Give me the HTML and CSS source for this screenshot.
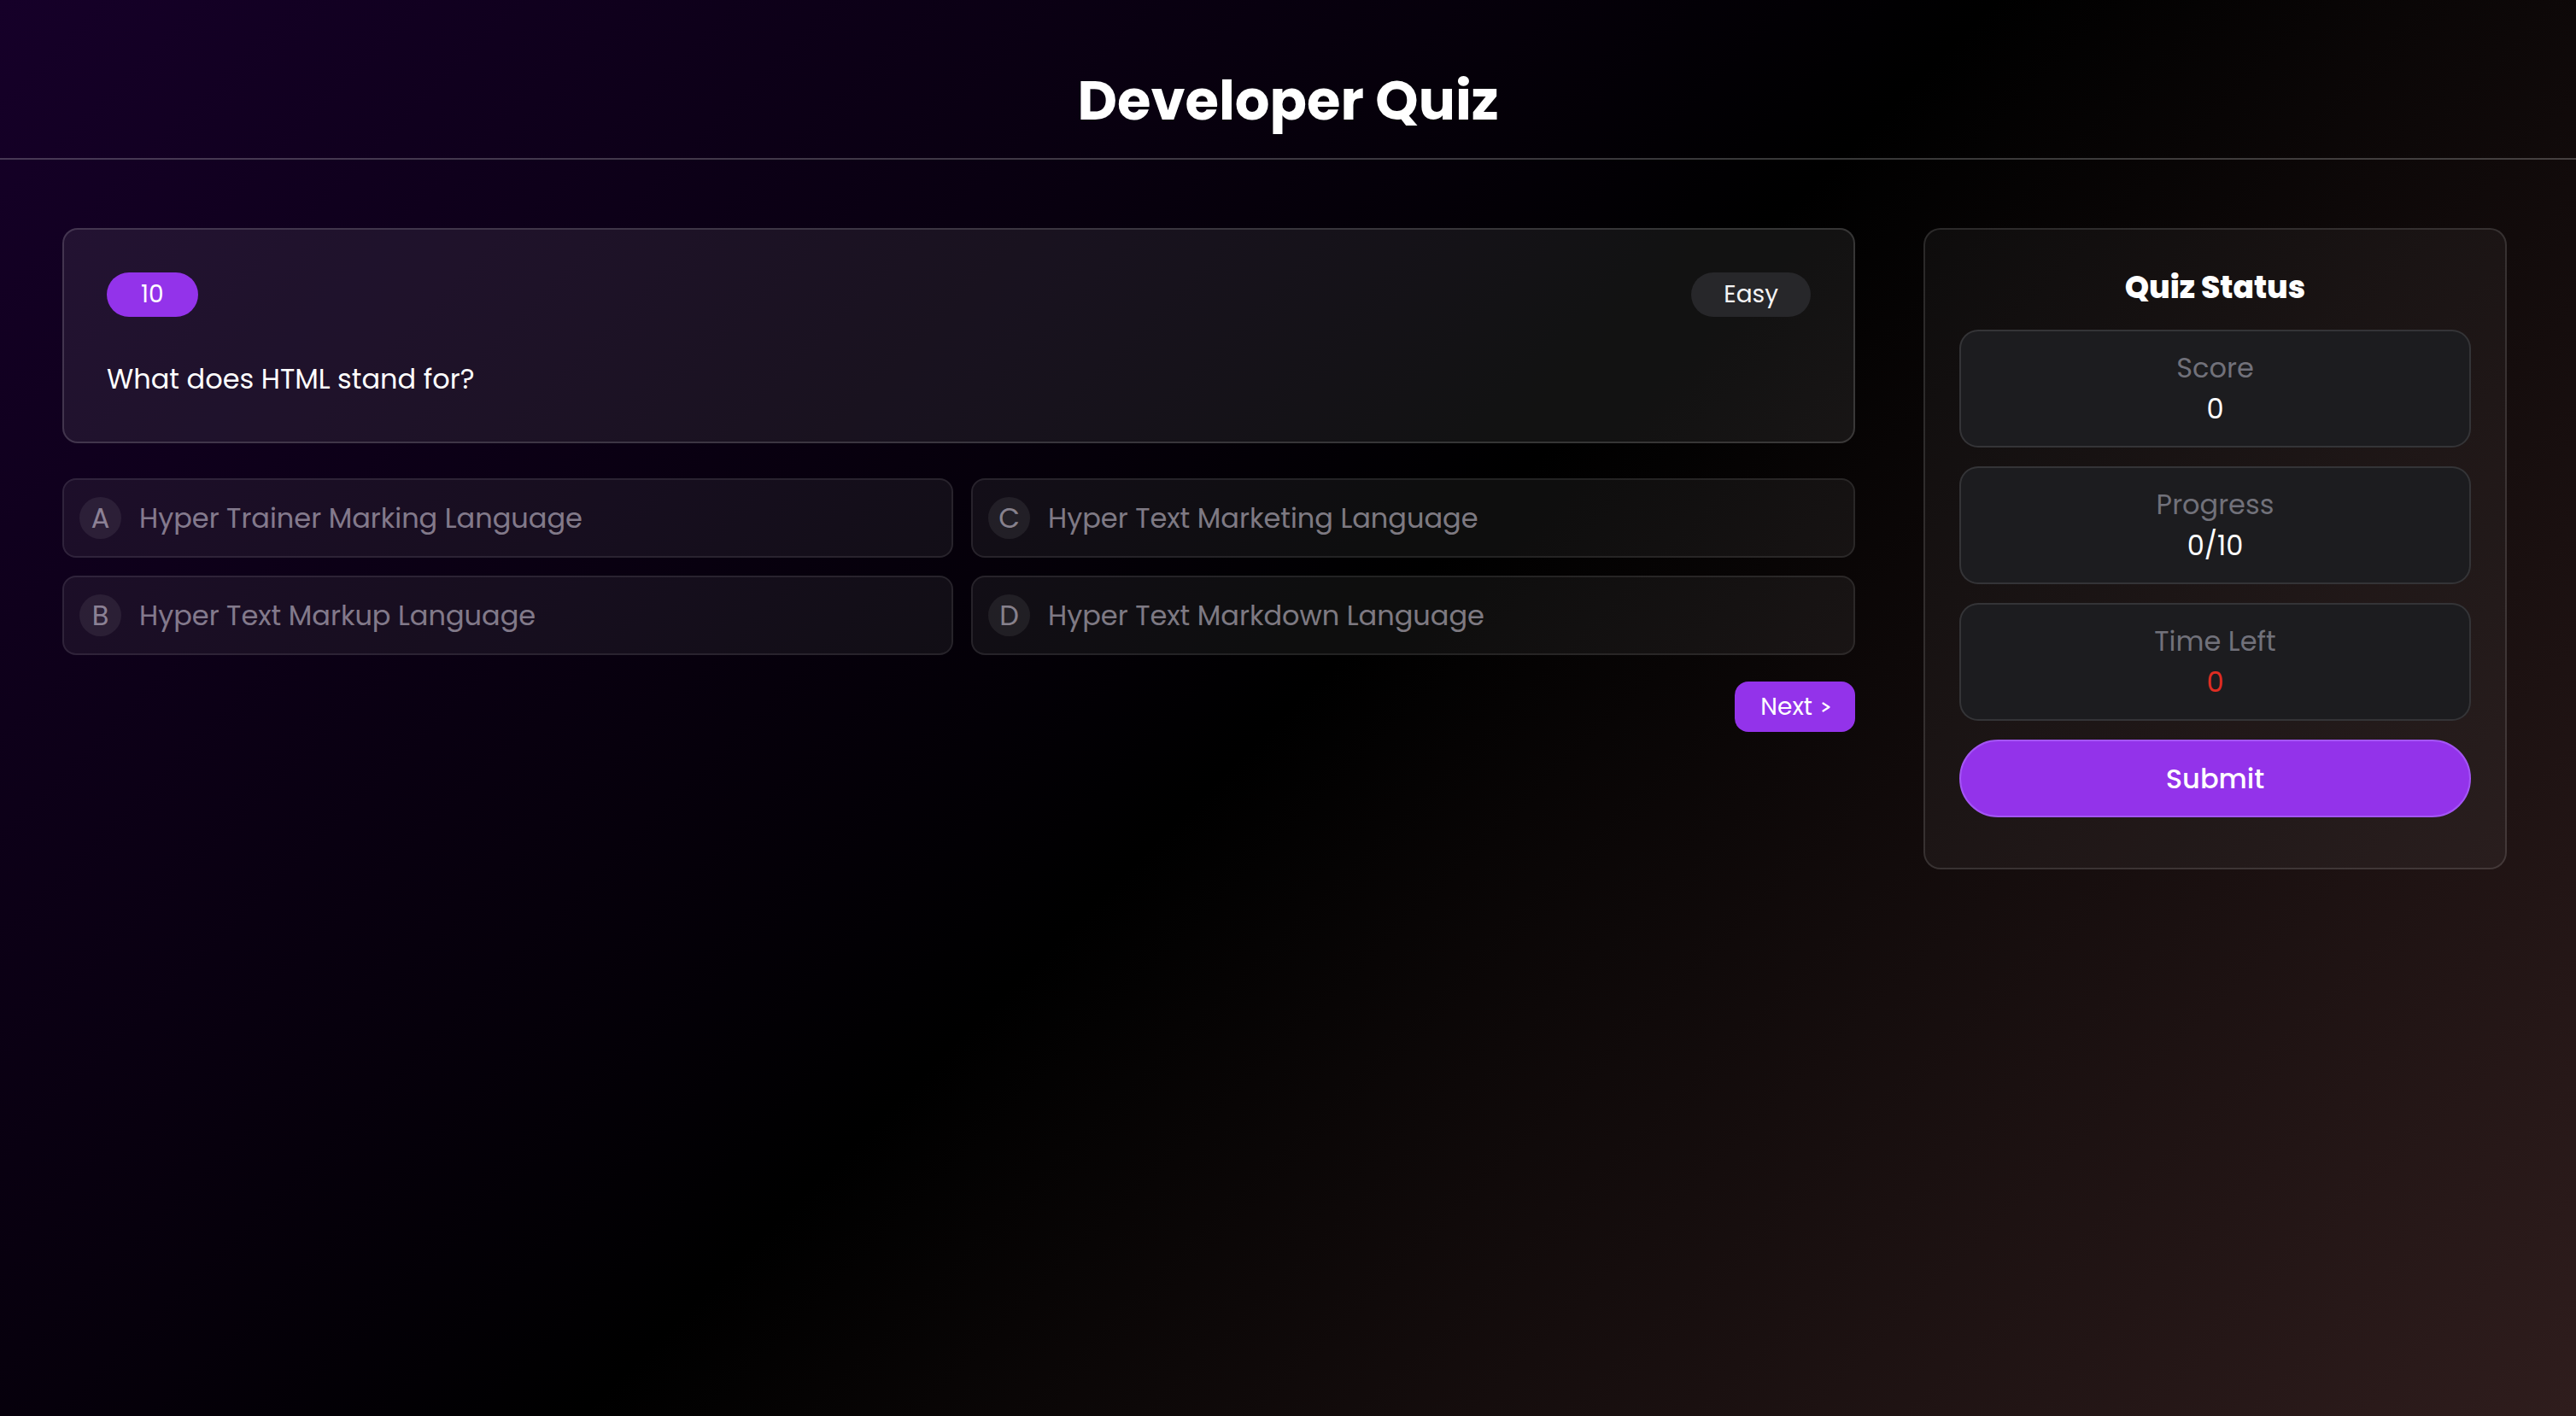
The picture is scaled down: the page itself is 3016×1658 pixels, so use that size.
FILE: index.html
```html
<!DOCTYPE html>
<html lang="en">
<head>
<meta charset="utf-8">
<title>Developer Quiz</title>
<link rel="stylesheet" href="styles.css">
</head>
<body>
<header class="site-header">
  <h1 class="site-title">Developer Quiz</h1>
</header>
<main class="layout">
  <section class="quiz-column">
    <div class="question-card">
      <div class="question-top">
        <span class="badge badge-number">10</span>
        <span class="badge badge-level">Easy</span>
      </div>
      <p class="question-text">What does HTML stand for?</p>
    </div>
    <div class="options">
      <div class="option"><span class="option-letter">A</span><span class="option-text">Hyper Trainer Marking Language</span></div>
      <div class="option"><span class="option-letter">C</span><span class="option-text">Hyper Text Marketing Language</span></div>
      <div class="option"><span class="option-letter">B</span><span class="option-text">Hyper Text Markup Language</span></div>
      <div class="option"><span class="option-letter">D</span><span class="option-text">Hyper Text Markdown Language</span></div>
    </div>
    <div class="nav-row">
      <button class="next-btn" type="button">Next
        <svg class="chev" width="12" height="12" viewBox="0 0 12 12" aria-hidden="true"><polyline points="2.5,1.5 9.5,6 2.5,10.5" fill="none" stroke="#fff" stroke-width="2.2" stroke-linecap="round" stroke-linejoin="round"/></svg>
      </button>
    </div>
  </section>
  <aside class="status-panel">
    <h2 class="status-title">Quiz Status</h2>
    <div class="stat-box"><div class="stat-label">Score</div><div class="stat-value">0</div></div>
    <div class="stat-box"><div class="stat-label">Progress</div><div class="stat-value">0/10</div></div>
    <div class="stat-box"><div class="stat-label">Time Left</div><div class="stat-value stat-danger">0</div></div>
    <button class="submit-btn" type="button">Submit</button>
  </aside>
</main>
</body>
</html>
```
FILE: styles.css
```css
* { box-sizing: border-box; }

html, body {
  margin: 0;
  padding: 0;
}

body {
  min-height: 1658px;
  font-family: "Poppins", "Inter", "Noto Sans", sans-serif;
  color: #fff;
  background: linear-gradient(135deg, #160029 0%, #000000 50%, #2f1d1d 100%);
}

.site-header {
  padding: 70px 0 19px;
  border-bottom: 2px solid rgba(255, 255, 255, 0.22);
  text-align: center;
}

.site-title {
  margin: 0;
  font-size: 64px;
  line-height: 96px;
  font-weight: 700;
}

.layout {
  display: flex;
  align-items: flex-start;
  gap: 80px;
  padding: 80px 81px 0 73px;
}

.quiz-column {
  flex: 1;
  min-width: 0;
}

.question-card {
  border: 2px solid rgba(255, 255, 255, 0.15);
  border-radius: 18px;
  background: rgba(255, 255, 255, 0.07);
  padding: 50px 50px 49px;
}

.question-top {
  display: flex;
  justify-content: space-between;
  align-items: center;
}

.badge {
  display: inline-block;
  height: 52px;
  padding: 0 38px;
  border-radius: 999px;
  font-size: 28px;
  line-height: 52px;
}

.badge-number {
  background: #9333ea;
  color: #fff;
  padding: 0 40px;
}

.badge-level {
  background: #27272a;
  color: #f4f4f5;
}

.question-text {
  margin: 49px 0 0;
  font-size: 32px;
  line-height: 48px;
}

.options {
  display: grid;
  grid-template-columns: auto auto;
  gap: 21px;
  margin-top: 41px;
}

.option {
  display: flex;
  align-items: center;
  gap: 21px;
  padding: 20px 18px;
  border: 2px solid rgba(255, 255, 255, 0.09);
  border-radius: 16px;
  background: rgba(255, 255, 255, 0.055);
  color: rgba(236, 228, 244, 0.52);
}

.option-letter {
  flex: none;
  width: 49px;
  height: 49px;
  border-radius: 50%;
  background: rgba(255, 255, 255, 0.07);
  display: flex;
  align-items: center;
  justify-content: center;
  font-size: 32px;
  line-height: 1;
}

.option-text {
  font-size: 32px;
  line-height: 48px;
}

.nav-row {
  display: flex;
  justify-content: flex-end;
  margin-top: 31px;
}

.next-btn {
  display: inline-flex;
  align-items: center;
  gap: 10px;
  height: 59px;
  padding: 0 28px 0 30px;
  border: 0;
  border-radius: 16px;
  background: #9333ea;
  color: #fff;
  font-family: inherit;
  font-size: 28px;
  font-weight: 400;
  cursor: pointer;
}

.chev { display: block; }

.status-panel {
  flex: none;
  width: 683px;
  padding: 40px 40px 59px;
  border: 2px solid rgba(255, 255, 255, 0.12);
  border-radius: 20px;
  background: rgba(255, 255, 255, 0.045);
  display: flex;
  flex-direction: column;
  gap: 22px;
}

.status-title {
  margin: 0 0 -1px;
  text-align: center;
  font-size: 36px;
  line-height: 56px;
  font-weight: 800;
}

.stat-box {
  height: 138px;
  padding: 19px 0;
  border: 2px solid rgba(255, 255, 255, 0.11);
  border-radius: 22px;
  background: #1c1c1f;
  text-align: center;
}

.stat-label {
  font-size: 32px;
  line-height: 48px;
  color: #71717a;
}

.stat-value {
  font-size: 32px;
  line-height: 48px;
  color: #fff;
}

.stat-danger { color: #e02d22; }

.submit-btn {
  height: 91px;
  border: 2px solid #a455f5;
  border-radius: 999px;
  background: #9333ea;
  color: #fff;
  font-family: inherit;
  font-size: 32px;
  font-weight: 500;
  cursor: pointer;
}
```
